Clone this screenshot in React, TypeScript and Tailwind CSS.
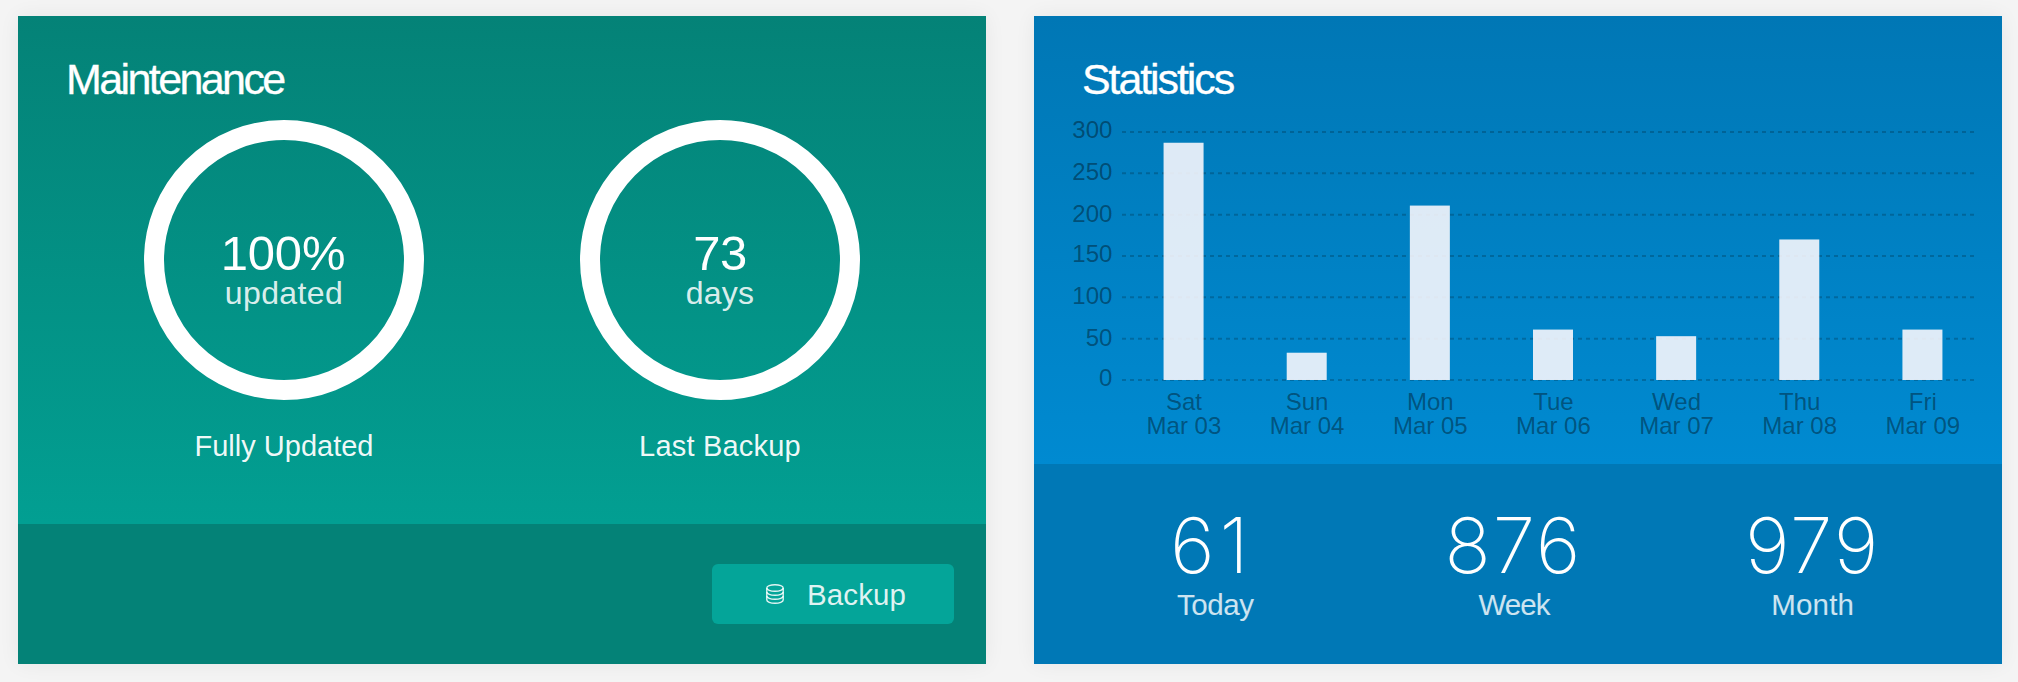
import React from 'react';

const days = [
  { day: 'Sat', date: 'Mar 03', value: 287 },
  { day: 'Sun', date: 'Mar 04', value: 33 },
  { day: 'Mon', date: 'Mar 05', value: 211 },
  { day: 'Tue', date: 'Mar 06', value: 61 },
  { day: 'Wed', date: 'Mar 07', value: 53 },
  { day: 'Thu', date: 'Mar 08', value: 170 },
  { day: 'Fri', date: 'Mar 09', value: 61 },
];

const ticks = [
  { value: 300, baseline: 29 },
  { value: 250, baseline: 71 },
  { value: 200, baseline: 113 },
  { value: 150, baseline: 153 },
  { value: 100, baseline: 195 },
  { value: 50, baseline: 237 },
  { value: 0, baseline: 277 },
];

const PLOT_LEFT = 88;
const COLUMN = 862 / 7;
const yOf = (value: number) => 271 - (value * 248) / 300;

function Ring({ value, unit, label, valueClass, unitClass, labelClass }: {
  value: string; unit: string; label: string; valueClass: string; unitClass: string; labelClass: string;
}) {
  return (
    <div className="flex flex-col items-center">
      <div className="flex h-[280px] w-[280px] flex-col items-center rounded-full border-[20px] border-white pt-[90px]">
        <span className={`text-[49px] leading-[46px] text-white ${valueClass}`}>{value}</span>
        <span className={`text-[32px] leading-[34px] text-white/87 ${unitClass}`}>{unit}</span>
      </div>
      <span className={`mt-[26px] text-[29px] leading-[40px] text-white/95 ${labelClass}`}>{label}</span>
    </div>
  );
}

function DatabaseIcon() {
  return (
    <svg width="18" height="20" viewBox="0 0 18 20" fill="none" stroke="currentColor" strokeWidth="1.4">
      <ellipse cx="9" cy="4" rx="8.2" ry="3.3" />
      <path d="M.8 4v12c0 1.8 3.7 3.3 8.2 3.3s8.2-1.5 8.2-3.3V4" />
      <path d="M.8 8c0 1.8 3.7 3.3 8.2 3.3s8.2-1.5 8.2-3.3" />
      <path d="M.8 12c0 1.8 3.7 3.3 8.2 3.3s8.2-1.5 8.2-3.3" />
    </svg>
  );
}

function Chart() {
  return (
    <svg className="block overflow-visible" width="968" height="355" viewBox="0 0 968 355" fontSize="24">
      {ticks.map((t) => (
        <g key={t.value}>
          <text x="78.4" y={t.baseline} textAnchor="end" fill="#000" fillOpacity="0.4">{t.value}</text>
          <line x1={PLOT_LEFT} x2="941" y1={yOf(t.value)} y2={yOf(t.value)} stroke="#000" strokeOpacity="0.2" strokeWidth="2" strokeDasharray="4 4" />
        </g>
      ))}
      {days.map((d, i) => {
        const cx = PLOT_LEFT + COLUMN * (i + 0.5);
        return (
          <g key={d.day}>
            <rect x={cx - 20} y={yOf(d.value)} width="40" height={271 - yOf(d.value)} fill="#fffafe" fillOpacity="0.87" />
            <text x={cx + 0.4} y="301" textAnchor="middle" fill="#000" fillOpacity="0.4">{d.day}</text>
            <text x={cx + 0.4} y="325" textAnchor="middle" fill="#000" fillOpacity="0.4">{d.date}</text>
          </g>
        );
      })}
    </svg>
  );
}

function Total({ value, label, valueClass, labelClass }: {
  value: string; label: string; valueClass: string; labelClass: string;
}) {
  return (
    <div className="flex flex-col items-center">
      <span className={`font-['Inter'] text-[76.5px] leading-[78px] font-extralight text-white ${valueClass}`}>{value}</span>
      <span className={`mt-px text-[29.5px] leading-[40px] text-white/80 ${labelClass}`}>{label}</span>
    </div>
  );
}

export default function App() {
  return (
    <div className="flex h-[682px] w-[2018px] gap-[48px] overflow-hidden bg-[#f4f4f4] px-[18px] pt-[16px] font-['Liberation_Sans',Arial,sans-serif] whitespace-nowrap">
      <section className="flex h-[648px] w-[968px] shrink-0 flex-col shadow-[0_0_20px_rgba(0,0,0,0.06)]">
        <div className="h-[508px] bg-linear-to-b from-[#048277] to-[#029f92] pt-[33px]">
          <h2 className="pl-[48px] text-[43px] leading-[60px] tracking-[-2.6px] text-white [-webkit-text-stroke:0.3px_white]">Maintenance</h2>
          <div className="mt-[11px] grid grid-cols-2 px-[48px]">
            <Ring value="100%" unit="updated" label="Fully Updated" valueClass="pr-[2px] tracking-[-0.2px]" unitClass="tracking-[0.4px]" labelClass="tracking-normal" />
            <Ring value="73" unit="days" label="Last Backup" valueClass="tracking-[-0.5px]" unitClass="tracking-[0.2px]" labelClass="tracking-[0.2px]" />
          </div>
        </div>
        <div className="flex h-[140px] items-center justify-end bg-[#048277] pr-[32px]">
          <button className="flex h-[60px] w-[242px] items-center rounded-[6px] bg-[#04a599] pl-[54px] text-white/88">
            <DatabaseIcon />
            <span className="ml-[23px] pt-[2px] text-[29.5px] leading-[40px] tracking-[0.1px]">Backup</span>
          </button>
        </div>
      </section>

      <section className="flex h-[648px] w-[968px] shrink-0 flex-col shadow-[0_0_20px_rgba(0,0,0,0.06)]">
        <div className="h-[448px] bg-linear-to-b from-[#0077b5] to-[#008ad1] pt-[33px]">
          <h2 className="pl-[48px] text-[43px] leading-[60px] tracking-[-2.1px] text-white [-webkit-text-stroke:0.3px_white]">Statistics</h2>
          <Chart />
        </div>
        <div className="grid h-[200px] grid-cols-3 bg-[#0078b6] pt-[42px] pr-[40px] pl-[32px]">
          <Total value="61" label="Today" valueClass="pr-[7px] tracking-[5px]" labelClass="tracking-[-0.4px]" />
          <Total value="876" label="Week" valueClass="pr-[1px] tracking-[2px]" labelClass="tracking-[-1px]" />
          <Total value="979" label="Month" valueClass="tracking-[2px]" labelClass="tracking-[0.2px]" />
        </div>
      </section>
    </div>
  );
}
